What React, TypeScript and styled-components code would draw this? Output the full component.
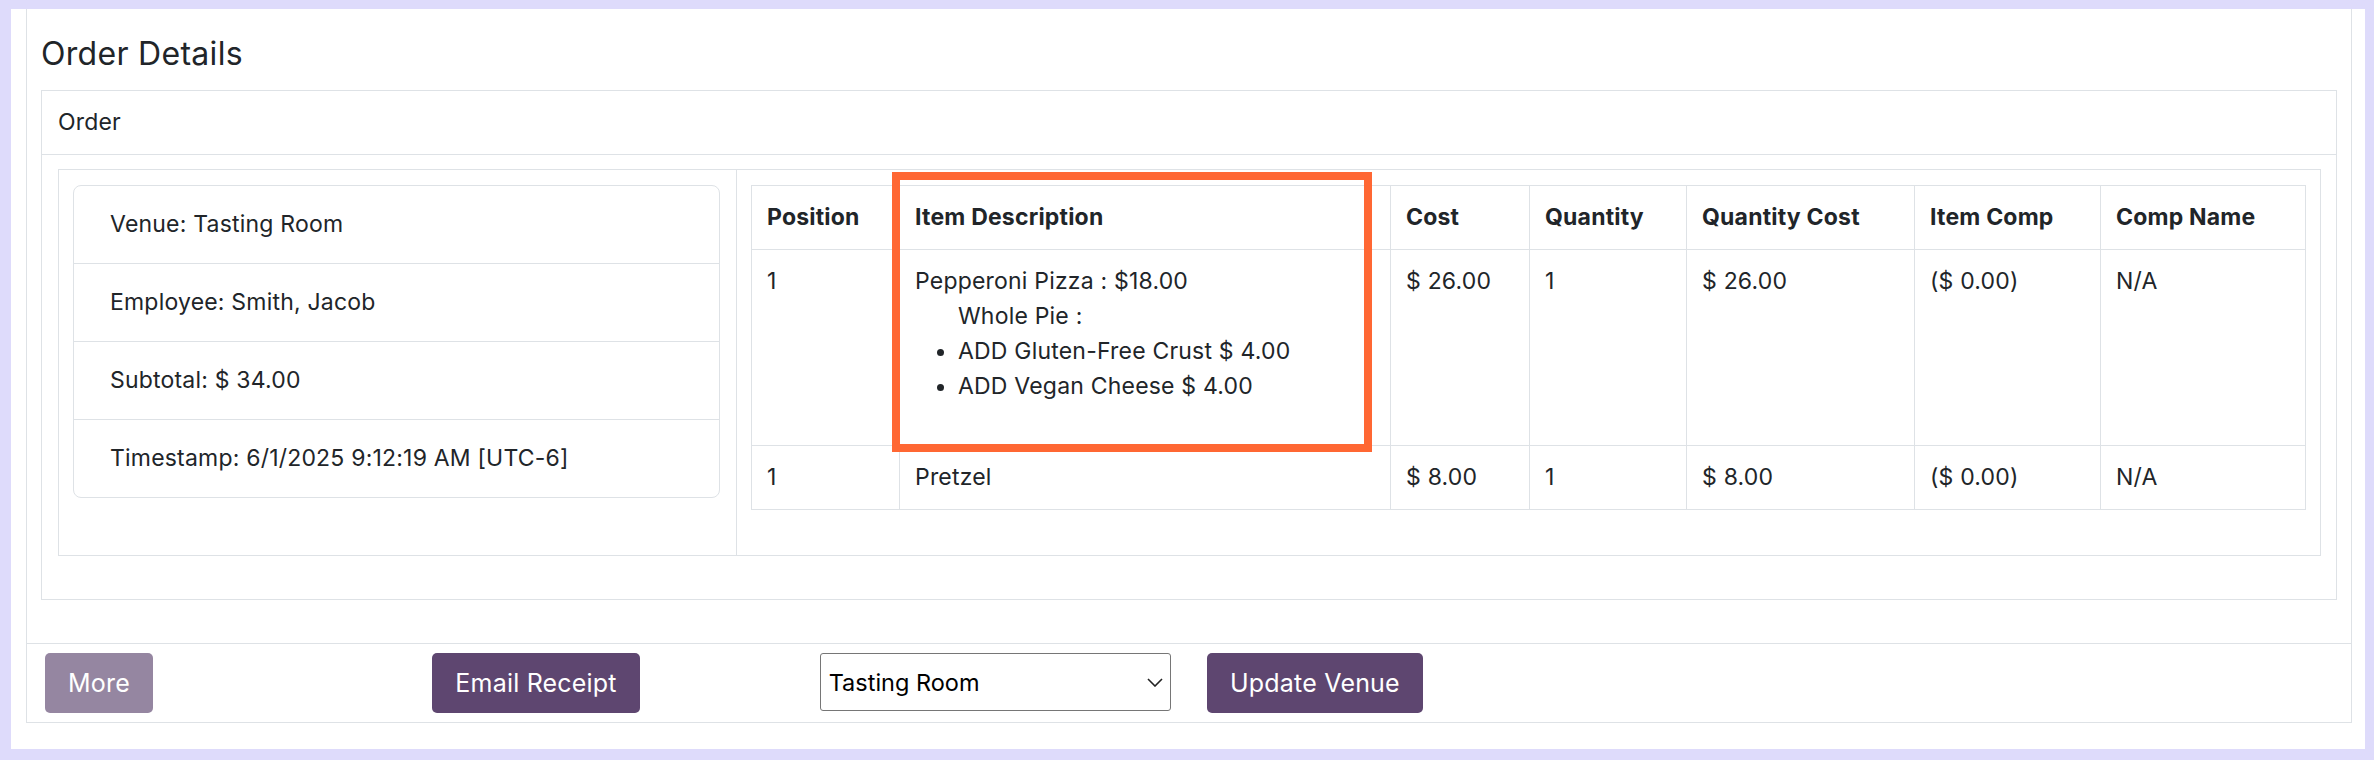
import React from 'react';
import styled, { createGlobalStyle } from 'styled-components';

const GlobalStyle = createGlobalStyle`
  html, body { margin: 0; padding: 0; background: #DEDBFB; }
  body { font-family: Inter, "Noto Sans", sans-serif; color: #212529; }
  *, *::before, *::after { box-sizing: border-box; }
`;

const Frame = styled.div`
  width: 2374px;
  height: 760px;
  padding: 9px 9px 11px 11px;
  background: #DEDBFB;
`;

const Sheet = styled.div`
  height: 100%;
  background: #ffffff;
  padding: 0 13px 0 15px;
`;

const Panel = styled.section`
  border: 1px solid #dee2e6;
  border-top: none;
`;

const PanelBody = styled.div`
  padding: 27px 14px 43px 14px;
`;

const Title = styled.h2`
  margin: 0 0 18px;
  font-size: 32px;
  line-height: 36px;
  font-weight: 400;
  letter-spacing: 0.3px;
`;

const Card = styled.div`
  border: 1px solid #dee2e6;
`;

const CardHeader = styled.div`
  padding: 15px 16px;
  font-size: 23px;
  line-height: 33px;
  letter-spacing: 0.15px;
  border-bottom: 1px solid #dee2e6;
`;

const CardBody = styled.div`
  padding: 14px 15px 43px 16px;
`;

const SplitBox = styled.div`
  border: 1px solid #dee2e6;
  display: grid;
  grid-template-columns: 678px 1fr;
`;

const SideCol = styled.div`
  border-right: 1px solid #dee2e6;
  padding: 15px 16px 56px 14px;
`;

const MainCol = styled.div`
  padding: 15px 15px 45px 14px;
`;

const InfoList = styled.ul`
  list-style: none;
  margin: 0;
  padding: 0;
  border: 1px solid #dee2e6;
  border-radius: 8px;
`;

const InfoItem = styled.li`
  padding: 21px 36px;
  font-size: 23px;
  line-height: 35px;
  letter-spacing: 0.2px;
  & + & {
    border-top: 1px solid #dee2e6;
  }
`;

const TableWrap = styled.div`
  position: relative;
`;

const Table = styled.table`
  width: 100%;
  border-collapse: collapse;
  table-layout: fixed;
  font-size: 23px;
  line-height: 35px;
  letter-spacing: 0.2px;
`;

const HeadCell = styled.th`
  text-align: left;
  font-weight: 700;
  padding: 14px 15px;
  border: 1px solid #dee2e6;
  vertical-align: top;
`;

const Cell = styled.td`
  padding: 14px 15px;
  border: 1px solid #dee2e6;
  vertical-align: top;
`;

const ModGroup = styled.div`
  padding-left: 43px;
`;

const ModList = styled.ul`
  margin: 0 0 27px;
  padding-left: 43px;
`;

const Highlight = styled.div`
  position: absolute;
  left: 141px;
  top: -13px;
  width: 480px;
  height: 280px;
  border: 8px solid #FF6733;
  pointer-events: none;
`;

const Footer = styled.div`
  border-top: 1px solid #dee2e6;
  display: grid;
  grid-template-columns: repeat(6, 1fr);
  align-items: start;
  padding: 9px 0;
`;

const FooterCell = styled.div`
  padding: 0 18px;
`;

const Button = styled.button<{ $muted?: boolean }>`
  height: 60px;
  padding: 0 23px;
  border: none;
  border-radius: 5px;
  background: #5E4670;
  color: #ffffff;
  font-family: Inter, "Noto Sans", sans-serif;
  font-size: 25px;
  letter-spacing: 0.2px;
  opacity: ${(p) => (p.$muted ? 0.65 : 1)};
  cursor: pointer;
`;

const SelectWrap = styled.div`
  position: relative;
  width: 100%;
`;

const Select = styled.select`
  appearance: none;
  -webkit-appearance: none;
  width: 100%;
  height: 58px;
  padding: 0 36px 0 8px;
  border: 1px solid #767676;
  border-radius: 3px;
  background: #ffffff;
  color: #000000;
  font-family: Inter, "Noto Sans", sans-serif;
  font-size: 23.5px;
`;

const Chevron = styled.svg`
  position: absolute;
  right: 8px;
  top: 25px;
  width: 16px;
  height: 9px;
  pointer-events: none;
`;

const columns = [148, 491, 139, 157, 228, 186, 205];
const headers = ['Position', 'Item Description', 'Cost', 'Quantity', 'Quantity Cost', 'Item Comp', 'Comp Name'];

export default function App() {
  return (
    <>
      <GlobalStyle />
      <Frame>
        <Sheet>
          <Panel>
            <PanelBody>
              <Title>Order Details</Title>
              <Card>
                <CardHeader>Order</CardHeader>
                <CardBody>
                  <SplitBox>
                    <SideCol>
                      <InfoList>
                        <InfoItem>Venue: Tasting Room</InfoItem>
                        <InfoItem>Employee: Smith, Jacob</InfoItem>
                        <InfoItem>Subtotal: $ 34.00</InfoItem>
                        <InfoItem>Timestamp: 6/1/2025 9:12:19 AM [UTC-6]</InfoItem>
                      </InfoList>
                    </SideCol>
                    <MainCol>
                      <TableWrap>
                        <Table>
                          <colgroup>
                            {columns.map((w, i) => (
                              <col key={i} style={{ width: `${w}px` }} />
                            ))}
                          </colgroup>
                          <thead>
                            <tr>
                              {headers.map((h) => (
                                <HeadCell key={h}>{h}</HeadCell>
                              ))}
                            </tr>
                          </thead>
                          <tbody>
                            <tr>
                              <Cell>1</Cell>
                              <Cell>
                                Pepperoni Pizza : $18.00
                                <ModGroup>Whole Pie :</ModGroup>
                                <ModList>
                                  <li>ADD Gluten-Free Crust $ 4.00</li>
                                  <li>ADD Vegan Cheese $ 4.00</li>
                                </ModList>
                              </Cell>
                              <Cell>$ 26.00</Cell>
                              <Cell>1</Cell>
                              <Cell>$ 26.00</Cell>
                              <Cell>($ 0.00)</Cell>
                              <Cell>N/A</Cell>
                            </tr>
                            <tr>
                              <Cell>1</Cell>
                              <Cell>Pretzel</Cell>
                              <Cell>$ 8.00</Cell>
                              <Cell>1</Cell>
                              <Cell>$ 8.00</Cell>
                              <Cell>($ 0.00)</Cell>
                              <Cell>N/A</Cell>
                            </tr>
                          </tbody>
                        </Table>
                        <Highlight />
                      </TableWrap>
                    </MainCol>
                  </SplitBox>
                </CardBody>
              </Card>
            </PanelBody>
            <Footer>
              <FooterCell>
                <Button $muted>More</Button>
              </FooterCell>
              <FooterCell>
                <Button>Email Receipt</Button>
              </FooterCell>
              <FooterCell>
                <SelectWrap>
                  <Select defaultValue="Tasting Room">
                    <option>Tasting Room</option>
                  </Select>
                  <Chevron viewBox="0 0 16 9" fill="none">
                    <path d="M1 1l7 7 7-7" stroke="#222" strokeWidth="1.6" />
                  </Chevron>
                </SelectWrap>
              </FooterCell>
              <FooterCell>
                <Button>Update Venue</Button>
              </FooterCell>
            </Footer>
          </Panel>
        </Sheet>
      </Frame>
    </>
  );
}
